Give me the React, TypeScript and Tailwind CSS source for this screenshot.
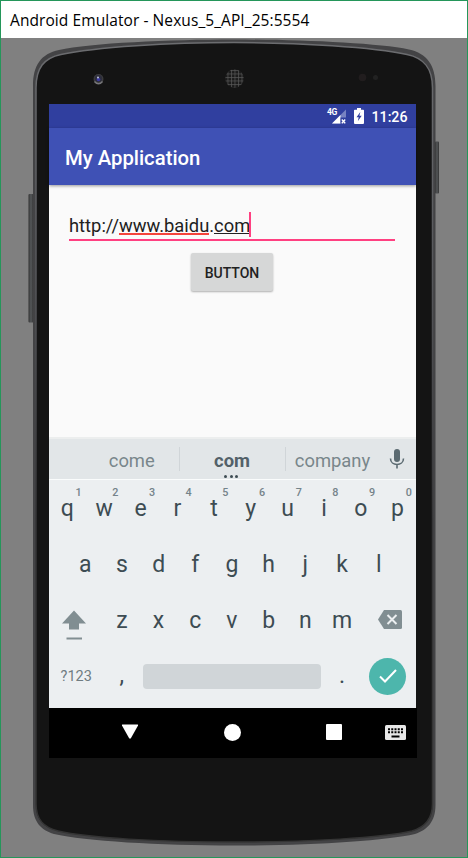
import React from "react";

const topRow = ["q", "w", "e", "r", "t", "y", "u", "i", "o", "p"];
const midRow = ["a", "s", "d", "f", "g", "h", "j", "k", "l"];
const lowRow = ["z", "x", "c", "v", "b", "n", "m"];

function Shell() {
  const body =
    "M33 86C33 65 41 54 59 50C90 43 170 39.5 234 39.5C298 39.5 378 43 409 49.5C427 53.500 435.500 65 435.500 86V805C435.500 822 427 830 415 834C385 841 310 845.500 234 845.500C158 845.500 85 841 54 834C41 830 33 822 33 805Z";
  const inner =
    "M36 88C36 68 44 58 61 54.500C95 47 170 42.500 234 42.500C298 42.500 374 47 407 54.500C424 58 432.500 68 432.500 88V804C432.500 820 424 827.500 412 831C382 838 310 842 234 842C158 842 88 838 58 831C44 827.500 36 820 36 804Z";
  return (
    <svg className="absolute inset-0" width="468" height="858" viewBox="0 0 468 858">
      <defs>
        <linearGradient id="rim" x1="0" y1="0" x2="0" y2="1">
          <stop offset="0" stopColor="#6c6d70" />
          <stop offset=".3" stopColor="#55565a" />
          <stop offset=".6" stopColor="#343436" />
          <stop offset="1" stopColor="#343434" />
        </linearGradient>
        <linearGradient id="side" x1="0" y1="0" x2="1" y2="0">
          <stop offset="0" stopColor="#333" />
          <stop offset=".5" stopColor="#55585a" />
          <stop offset="1" stopColor="#333" />
        </linearGradient>
        <pattern id="mesh" width="3.500" height="3.500" patternUnits="userSpaceOnUse">
          <rect width="3.500" height="3.500" fill="#1b1b1b" />
          <path d="M0 .5H3.500M.5 0V3.500" stroke="#585858" strokeWidth=".7" />
        </pattern>
      </defs>
      <rect x="28.500" y="194" width="5" height="128.500" rx="1" fill="url(#side)" />
      <rect x="435" y="141.500" width="4" height="52" rx="1" fill="url(#side)" />
      <path d={body} fill="#434345" />
      <path d={inner} fill="#141414" stroke="url(#rim)" strokeWidth="1.500" />
      <circle cx="98.500" cy="79" r="5" fill="#3c3c3e" />
      <path d="M94.500 81.500Q98.500 86 102.500 81.500" fill="none" stroke="#77777a" strokeWidth="1.500" />
      <circle cx="98.500" cy="78.500" r="3.600" fill="#2c2d3c" />
      <circle cx="98.500" cy="79.500" r="1.800" fill="#3938a0" />
      <circle cx="98" cy="77.500" r="1" fill="#c3c6dd" />
      <circle cx="234.500" cy="78.500" r="9.300" fill="url(#mesh)" />
      <circle cx="362.500" cy="77.500" r="3.800" fill="#211d1e" />
      <circle cx="375.500" cy="77.500" r="2.500" fill="#222" />
    </svg>
  );
}

function StatusBar() {
  return (
    <div className="flex h-6 items-center justify-end bg-[#303f9f] pr-[8.5px] text-white">
      <span className="h-[19px] w-[10px] text-[8.5px] leading-[10px] font-bold tracking-[-0.4px]">4G</span>
      <svg width="20" height="18" viewBox="0 0 20 18" className="-ml-[8px]">
        <path d="M3 16.500 17 2.500V16.500Z" fill="#7883c2" />
        <path d="M3 16.500 11.500 8V16.500Z" fill="#fff" />
        <path d="M11.500 10.500H18V16.500H11.500Z" fill="#303f9f" />
        <path d="m12.800 12.500 3.400 3.800m0-3.800-3.400 3.800" stroke="#fff" strokeWidth="1.300" />
      </svg>
      <svg width="10" height="16" viewBox="0 0 10 16" className="ml-[5px]">
        <path d="M3 0H7V1.700H9.200Q10 1.700 10 2.500V15Q10 16 9 16H1Q0 16 0 15V2.500Q0 1.700.8 1.700H3Z" fill="#fff" />
        <path d="M6.300 4 2.500 9.300H4.700L3.800 13.300 7.700 7.800H5.400Z" fill="#303f9f" />
      </svg>
      <span className="mt-px ml-[7.5px] text-[14.200px] leading-6 font-medium">11:26</span>
    </div>
  );
}

function Suggestions() {
  return (
    <div className="flex h-[43px] items-center border-t-2 border-b border-t-[#eceeee] border-b-[#fafcfc] bg-[#e2e6e8] text-[18.400px] text-[#79868b]">
      <div className="w-[129.500px] pt-[4px] pl-[36px] text-center">come</div>
      <div className="h-6 w-px bg-[#d0d5d8]" />
      <div className="relative w-[105px] pt-[4px] text-center font-bold text-[#536169]">
        com
        <div className="absolute top-[32px] left-[44.5px] flex gap-[2.500px]">
          <i className="size-[3px] rounded-full bg-[#3d4c53]" />
          <i className="size-[3px] rounded-full bg-[#3d4c53]" />
          <i className="size-[3px] rounded-full bg-[#3d4c53]" />
        </div>
      </div>
      <div className="h-6 w-px bg-[#d0d5d8]" />
      <div className="w-[94px] pt-[4px] text-center">company</div>
      <svg width="16" height="20" viewBox="0 0 16 20" className="ml-[9.500px]">
        <rect x="5" y="0" width="6" height="13" rx="3" fill="#5b6a71" />
        <path d="M1.500 9.500C1.500 17.500 14.500 17.500 14.500 9.500M8 15.500V19.500" fill="none" stroke="#5b6a71" strokeWidth="1.600" />
      </svg>
    </div>
  );
}

function Key({ label, hint }: { label: string; hint?: string }) {
  return (
    <div className="relative w-[36.700px] text-center">
      {label}
      {hint && <span className="absolute top-[-16px] right-[4px] text-[10.800px] font-medium text-[#75838a]">{hint}</span>}
    </div>
  );
}

function Keyboard() {
  return (
    <div className="h-[228px] bg-[#eceff1] pt-px text-[23px] leading-[56px] text-[#3d4c53]">
      <div className="flex h-14">
        {topRow.map((k, i) => (
          <Key key={k} label={k} hint={String((i + 1) % 10)} />
        ))}
      </div>
      <div className="flex h-14 justify-center pr-px">
        {midRow.map((k) => (
          <Key key={k} label={k} />
        ))}
      </div>
      <div className="flex h-14 items-center">
        <div className="flex w-[54.500px] justify-center pr-[5px]">
          <svg width="24" height="32" viewBox="0 0 24 32" className="mt-[9px]" fill="#818e92">
            <path d="M12 .5 24 13.500H17V19.500H7V13.500H0Z" />
            <rect x="4.500" y="27.500" width="15.500" height="2" />
          </svg>
        </div>
        {lowRow.map((k) => (
          <Key key={k} label={k} />
        ))}
        <div className="flex w-[55px] justify-center pl-[4px]">
          <svg width="24" height="19" viewBox="0 0 24 19" className="mb-[3px]">
            <path d="M6 0H22.500Q24 0 24 1.500V17.500Q24 19 22.500 19H6L0 9.500Z" fill="#818e92" />
            <path d="m9.500 5 9 9m0-9-9 9" stroke="#eceff1" strokeWidth="2" />
          </svg>
        </div>
      </div>
      <div className="-mt-px flex h-14 items-center">
        <div className="w-[54.500px] pt-[2px] text-center text-[14.500px] text-[#6f7c81]">?123</div>
        <Key label="," />
        <div className="h-[25px] w-[183.500px] px-[3px]">
          <div className="h-full rounded-[4px] bg-[#d0d5d8]" />
        </div>
        <Key label="." />
        <div className="flex w-[55px] justify-center">
          <div className="flex size-[37px] items-center justify-center rounded-full bg-[#4db6ac]">
            <svg width="18" height="14" viewBox="0 0 18 14">
              <path d="m1 7.500 5 5L17 1" fill="none" stroke="#fff" strokeWidth="2" />
            </svg>
          </div>
        </div>
      </div>
    </div>
  );
}

function NavBar() {
  return (
    <div className="flex h-[50px] w-[368px] items-center bg-black pb-[2px]">
      <svg width="18" height="16" viewBox="0 0 18 16" className="ml-[72px]">
        <path d="M1.500.5H16.500Q17.500.5 17 1.500L10 14Q9 15.500 8 14L1 1.500Q.5.5 1.500.5Z" fill="#fff" />
      </svg>
      <div className="ml-[84.500px] size-[17px] rounded-full bg-white" />
      <div className="ml-[85.500px] size-4 rounded-[1px] bg-white" />
      <svg width="21" height="15" viewBox="0 0 21 15" className="ml-[43px]">
        <rect width="21" height="15" rx="1.500" fill="#e8e8e8" />
        <path d="M3 4.200H18M3 7.200H18" stroke="#000" strokeWidth="2" strokeDasharray="2 1.250" />
        <path d="M6.500 11.500H14.500" stroke="#000" strokeWidth="2" />
      </svg>
    </div>
  );
}

export default function App() {
  return (
    <div className="relative h-[858px] w-[468px] overflow-hidden bg-[#808080] font-['Roboto',sans-serif]">
      <Shell />
      <div className="relative flex h-[858px] flex-col border border-[#24965a]">
        <header className="h-[37px] bg-white pl-[9px] font-['Open_Sans',sans-serif] text-[15.500px] leading-[38px] tracking-[0.080px] text-black">
          <span className="whitespace-nowrap">Android Emulator - Nexus_5_API_25:5554</span>
        </header>
        <main className="mt-[66px] ml-[48px] flex w-[367px] flex-col">
          <StatusBar />
          <div className="z-10 flex h-[57px] items-center bg-[#3f51b5] pt-[3px] pl-4 text-[20.300px] font-medium text-white shadow-[0_1px_3px_rgba(0,0,0,0.4)]">
            My Application
          </div>
          <section className="flex h-[252px] flex-col items-center bg-[#fafafa] pt-[25px] pr-px">
            <div className="flex h-[31px] w-[326px] items-start border-b-2 border-[#ff4081] text-[18.350px] leading-[32px] text-[#212121]">
              <span>http://</span>
              <span className="h-[25px] border-b-2 border-[#f4443c]">www.baidu</span>
              <span>.</span>
              <span className="h-[24px] border-b border-[#212121]">com</span>
              <span className="-ml-px mt-[2px] h-[25px] w-[2px] bg-[#ff4081]" />
            </div>
            <button className="mt-[12px] h-[38px] w-[82px] rounded-[2px] bg-[#d6d7d7] pt-[2px] text-[14px] font-medium text-[#212121] shadow-[0_1px_2px_rgba(0,0,0,0.3)]">
              BUTTON
            </button>
          </section>
          <Suggestions />
          <Keyboard />
          <NavBar />
        </main>
      </div>
    </div>
  );
}
